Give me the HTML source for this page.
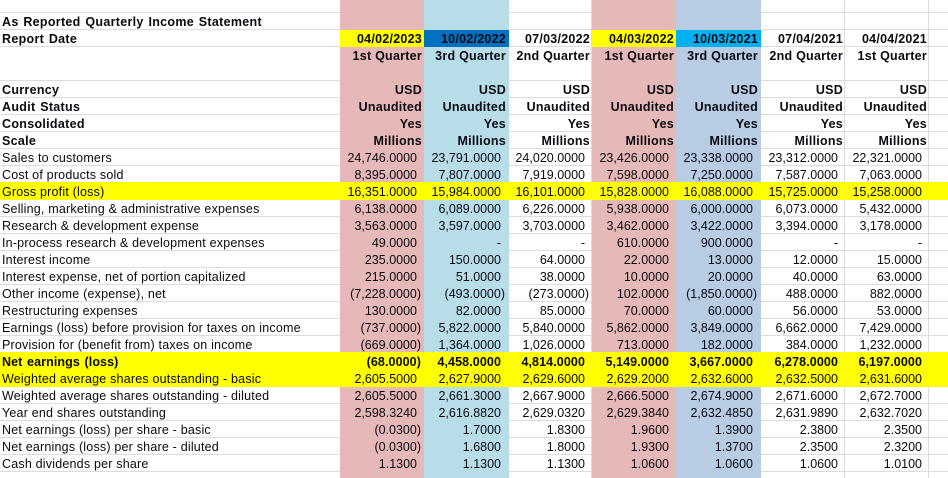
<!DOCTYPE html>
<html><head><meta charset="utf-8">
<style>
html,body{margin:0;padding:0;width:948px;height:478px;overflow:hidden;background:#fff}
#w{position:relative;width:948px;height:478px;overflow:hidden}
table{position:absolute;left:0;top:0;border-collapse:separate;border-spacing:0;table-layout:fixed;width:948px;font:12.5px/14px "Liberation Sans",Arial,sans-serif;color:#0a0a12}
td{box-sizing:border-box;height:17px;padding:2px 2px 0 0;text-align:right;white-space:nowrap;overflow:visible;border-bottom:1px solid #dcdcdc;border-right:1px solid #dcdcdc;vertical-align:top}
tr.top td{height:13px;padding:0}
td:first-child{text-align:left;padding-left:2px;border-right:0;letter-spacing:.2px;overflow:visible}
td:last-child{border-right:0}
td:nth-child(3),td:nth-child(6){padding-right:3px}
tr.bold td{padding-right:1px}
tr.bold td:nth-child(3),tr.bold td:nth-child(6){padding-right:2px}
tr.n td{padding-right:6px}
tr.n td:first-child{padding-right:0}
tr.n td:nth-child(3),tr.n td:nth-child(6){padding-right:7px}
tr.n td.p{padding-right:2px}
tr.n td.p:nth-child(3),tr.n td.p:nth-child(6){padding-right:3px}
td:nth-child(2),td:nth-child(5){background:#e6b8b7;border-color:#e6b8b7}
td:nth-child(3){background:#b7dee8;border-color:#b7dee8}
td:nth-child(6){background:#b8cce4;border-color:#b8cce4}
tr.bold td{font-weight:bold;letter-spacing:.25px}
tr.bold td:first-child{letter-spacing:.3px;word-spacing:1px}
tr.n.bold td{letter-spacing:.1px}
tr.s td{border-bottom:0}
tr.b td{border-bottom-color:#ff0 !important}
tr.y td{background:#ff0 !important;border-color:#ff0 !important}
td.d1{background:#ff0 !important;border-color:#ff0 !important}
td.d2{background:#0070c0 !important;border-color:#0070c0 !important}
td.d3{background:#00b0f0 !important;border-color:#00b0f0 !important}
</style></head><body>
<div id="w">
<table>
<colgroup><col style="width:340px"><col style="width:84px"><col style="width:85px"><col style="width:83px"><col style="width:84px"><col style="width:85px"><col style="width:84px"><col style="width:84px"><col style="width:19px"></colgroup>
<tr class="top"><td></td><td></td><td></td><td></td><td></td><td></td><td></td><td></td><td></td></tr>
<tr class="bold"><td>As Reported Quarterly Income Statement</td><td></td><td></td><td></td><td></td><td></td><td></td><td></td><td></td></tr>
<tr class="bold"><td>Report Date</td><td class="d1">04/02/2023</td><td class="d2">10/02/2022</td><td>07/03/2022</td><td class="d1">04/03/2022</td><td class="d3">10/03/2021</td><td>07/04/2021</td><td>04/04/2021</td><td></td></tr>
<tr class="bold s"><td></td><td>1st Quarter</td><td>3rd Quarter</td><td>2nd Quarter</td><td>1st Quarter</td><td>3rd Quarter</td><td>2nd Quarter</td><td>1st Quarter</td><td></td></tr>
<tr><td></td><td></td><td></td><td></td><td></td><td></td><td></td><td></td><td></td></tr>
<tr class="bold"><td>Currency</td><td>USD</td><td>USD</td><td>USD</td><td>USD</td><td>USD</td><td>USD</td><td>USD</td><td></td></tr>
<tr class="bold"><td>Audit Status</td><td>Unaudited</td><td>Unaudited</td><td>Unaudited</td><td>Unaudited</td><td>Unaudited</td><td>Unaudited</td><td>Unaudited</td><td></td></tr>
<tr class="bold"><td>Consolidated</td><td>Yes</td><td>Yes</td><td>Yes</td><td>Yes</td><td>Yes</td><td>Yes</td><td>Yes</td><td></td></tr>
<tr class="bold"><td>Scale</td><td>Millions</td><td>Millions</td><td>Millions</td><td>Millions</td><td>Millions</td><td>Millions</td><td>Millions</td><td></td></tr>
<tr class="n"><td>Sales to customers</td><td>24,746.0000</td><td>23,791.0000</td><td>24,020.0000</td><td>23,426.0000</td><td>23,338.0000</td><td>23,312.0000</td><td>22,321.0000</td><td></td></tr>
<tr class="n b"><td>Cost of products sold</td><td>8,395.0000</td><td>7,807.0000</td><td>7,919.0000</td><td>7,598.0000</td><td>7,250.0000</td><td>7,587.0000</td><td>7,063.0000</td><td></td></tr>
<tr class="n y"><td>Gross profit (loss)</td><td>16,351.0000</td><td>15,984.0000</td><td>16,101.0000</td><td>15,828.0000</td><td>16,088.0000</td><td>15,725.0000</td><td>15,258.0000</td><td></td></tr>
<tr class="n"><td>Selling, marketing &amp; administrative expenses</td><td>6,138.0000</td><td>6,089.0000</td><td>6,226.0000</td><td>5,938.0000</td><td>6,000.0000</td><td>6,073.0000</td><td>5,432.0000</td><td></td></tr>
<tr class="n"><td>Research &amp; development expense</td><td>3,563.0000</td><td>3,597.0000</td><td>3,703.0000</td><td>3,462.0000</td><td>3,422.0000</td><td>3,394.0000</td><td>3,178.0000</td><td></td></tr>
<tr class="n"><td>In-process research &amp; development expenses</td><td>49.0000</td><td>-</td><td>-</td><td>610.0000</td><td>900.0000</td><td>-</td><td>-</td><td></td></tr>
<tr class="n"><td>Interest income</td><td>235.0000</td><td>150.0000</td><td>64.0000</td><td>22.0000</td><td>13.0000</td><td>12.0000</td><td>15.0000</td><td></td></tr>
<tr class="n"><td>Interest expense, net of portion capitalized</td><td>215.0000</td><td>51.0000</td><td>38.0000</td><td>10.0000</td><td>20.0000</td><td>40.0000</td><td>63.0000</td><td></td></tr>
<tr class="n"><td>Other income (expense), net</td><td class="p">(7,228.0000)</td><td class="p">(493.0000)</td><td class="p">(273.0000)</td><td>102.0000</td><td class="p">(1,850.0000)</td><td>488.0000</td><td>882.0000</td><td></td></tr>
<tr class="n"><td>Restructuring expenses</td><td>130.0000</td><td>82.0000</td><td>85.0000</td><td>70.0000</td><td>60.0000</td><td>56.0000</td><td>53.0000</td><td></td></tr>
<tr class="n"><td>Earnings (loss) before provision for taxes on income</td><td class="p">(737.0000)</td><td>5,822.0000</td><td>5,840.0000</td><td>5,862.0000</td><td>3,849.0000</td><td>6,662.0000</td><td>7,429.0000</td><td></td></tr>
<tr class="n b"><td>Provision for (benefit from) taxes on income</td><td class="p">(669.0000)</td><td>1,364.0000</td><td>1,026.0000</td><td>713.0000</td><td>182.0000</td><td>384.0000</td><td>1,232.0000</td><td></td></tr>
<tr class="n y bold"><td>Net earnings (loss)</td><td class="p">(68.0000)</td><td>4,458.0000</td><td>4,814.0000</td><td>5,149.0000</td><td>3,667.0000</td><td>6,278.0000</td><td>6,197.0000</td><td></td></tr>
<tr class="n y"><td>Weighted average shares outstanding - basic</td><td>2,605.5000</td><td>2,627.9000</td><td>2,629.6000</td><td>2,629.2000</td><td>2,632.6000</td><td>2,632.5000</td><td>2,631.6000</td><td></td></tr>
<tr class="n"><td>Weighted average shares outstanding - diluted</td><td>2,605.5000</td><td>2,661.3000</td><td>2,667.9000</td><td>2,666.5000</td><td>2,674.9000</td><td>2,671.6000</td><td>2,672.7000</td><td></td></tr>
<tr class="n"><td>Year end shares outstanding</td><td>2,598.3240</td><td>2,616.8820</td><td>2,629.0320</td><td>2,629.3840</td><td>2,632.4850</td><td>2,631.9890</td><td>2,632.7020</td><td></td></tr>
<tr class="n"><td>Net earnings (loss) per share - basic</td><td class="p">(0.0300)</td><td>1.7000</td><td>1.8300</td><td>1.9600</td><td>1.3900</td><td>2.3800</td><td>2.3500</td><td></td></tr>
<tr class="n"><td>Net earnings (loss) per share - diluted</td><td class="p">(0.0300)</td><td>1.6800</td><td>1.8000</td><td>1.9300</td><td>1.3700</td><td>2.3500</td><td>2.3200</td><td></td></tr>
<tr class="n"><td>Cash dividends per share</td><td>1.1300</td><td>1.1300</td><td>1.1300</td><td>1.0600</td><td>1.0600</td><td>1.0600</td><td>1.0100</td><td></td></tr>
<tr><td></td><td></td><td></td><td></td><td></td><td></td><td></td><td></td><td></td></tr>
</table>
</div>
</body></html>
